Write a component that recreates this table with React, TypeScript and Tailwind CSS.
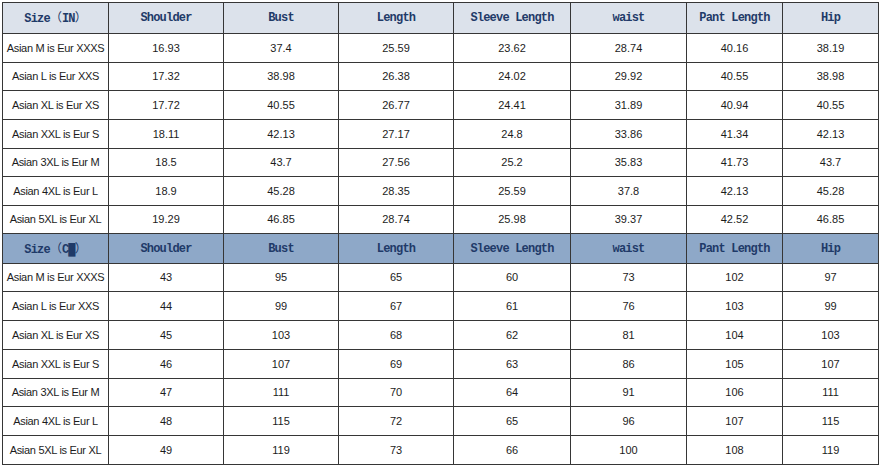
const COLS = ['w-[106px]', 'w-[115px]', 'w-[115px]', 'w-[115px]', 'w-[117px]', 'w-[116px]', 'w-[96px]', 'w-[96px]'];

const HEAD = ['Shoulder', 'Bust', 'Length', 'Sleeve Length', 'waist', 'Pant Length', 'Hip'];

const SIZES = [
  'Asian M is Eur XXXS',
  'Asian L is Eur XXS',
  'Asian XL is Eur XS',
  'Asian XXL is Eur S',
  'Asian 3XL is Eur M',
  'Asian 4XL is Eur L',
  'Asian 5XL is Eur XL',
];

const INCH = [
  ['16.93', '37.4', '25.59', '23.62', '28.74', '40.16', '38.19'],
  ['17.32', '38.98', '26.38', '24.02', '29.92', '40.55', '38.98'],
  ['17.72', '40.55', '26.77', '24.41', '31.89', '40.94', '40.55'],
  ['18.11', '42.13', '27.17', '24.8', '33.86', '41.34', '42.13'],
  ['18.5', '43.7', '27.56', '25.2', '35.83', '41.73', '43.7'],
  ['18.9', '45.28', '28.35', '25.59', '37.8', '42.13', '45.28'],
  ['19.29', '46.85', '28.74', '25.98', '39.37', '42.52', '46.85'],
];

const CM = [
  ['43', '95', '65', '60', '73', '102', '97'],
  ['44', '99', '67', '61', '76', '103', '99'],
  ['45', '103', '68', '62', '81', '104', '103'],
  ['46', '107', '69', '63', '86', '105', '107'],
  ['47', '111', '70', '64', '91', '106', '111'],
  ['48', '115', '72', '65', '96', '107', '115'],
  ['49', '119', '73', '66', '100', '108', '119'],
];

const IN_ROWS = ['h-[29px]', 'h-[28px]', 'h-[29px]', 'h-[29px]', 'h-[28px]', 'h-[29px]', 'h-[28px]'];
const CM_ROWS = ['h-[28px]', 'h-[29px]', 'h-[29px]', 'h-[29px]', 'h-[28px]', 'h-[29px]', 'h-[29px]'];

const cell = 'border border-[#363636] p-0 text-center align-middle';
const head = `${cell} font-['Liberation_Mono',monospace] text-[12px] tracking-[-0.8px] font-bold text-[#1f3a68] whitespace-nowrap`;
const body = `${cell} font-['Liberation_Sans',Arial,sans-serif] text-[11px] text-[#1c1c1c] whitespace-nowrap`;

// full-width brackets, as in the original sheet
function Paren({ children }: { children: string }) {
  return <span className="font-['Noto_Sans_CJK_SC',sans-serif] font-normal tracking-normal">{children}</span>;
}

function HeaderRow({ unit, bg, h }: { unit: string; bg: string; h: string }) {
  return (
    <tr className={`${h} ${bg}`}>
      <th className={head}>
        Size<Paren>（</Paren>{unit}<Paren>）</Paren>
      </th>
      {HEAD.map((t) => (
        <th key={t} className={head}>{t}</th>
      ))}
    </tr>
  );
}

function DataRows({ data, heights }: { data: string[][]; heights: string[] }) {
  return (
    <>
      {data.map((row, i) => (
        <tr key={i} className={`${heights[i]} bg-white`}>
          <td className={`${body} tracking-[-0.3px]`}>{SIZES[i]}</td>
          {row.map((v, j) => (
            <td key={j} className={body}>{v}</td>
          ))}
        </tr>
      ))}
    </>
  );
}

export default function App() {
  return (
    <div className="w-[880px] h-[468px] bg-white pt-[2px] pl-[2px] overflow-hidden">
      <table className="table-fixed border-collapse w-[876px]">
        <colgroup>
          {COLS.map((w, i) => (
            <col key={i} className={w} />
          ))}
        </colgroup>
        <tbody>
          <HeaderRow unit="IN" bg="bg-[#dce2eb]" h="h-[31px]" />
          <DataRows data={INCH} heights={IN_ROWS} />
          <HeaderRow unit="C█" bg="bg-[#8ea8c8]" h="h-[30px]" />
          <DataRows data={CM} heights={CM_ROWS} />
        </tbody>
      </table>
    </div>
  );
}
